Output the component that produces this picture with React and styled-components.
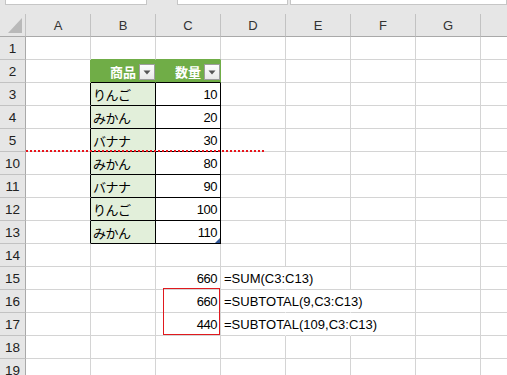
import React from 'react';
import styled, { createGlobalStyle } from 'styled-components';

const GRID = '#d4d4d4';
const HEAD_BG = '#e6e6e6';
const HEAD_LINE = '#c2c2c2';
const HEAD_EDGE = '#a9a9a9';
const GREEN = '#70ad47';
const LIGHT_GREEN = '#e2efda';
const INK = '#000';

const GlobalStyle = createGlobalStyle`
    html, body {
        margin: 0;
        padding: 0;
        background: #fff;
        overflow: hidden;
    }
    body {
        font-family: "Liberation Sans", "Noto Sans CJK JP", sans-serif;
    }
`;

// sheet data: row label, item (B), quantity (C), formula text (D)
const rows = [
    { n: 1 },
    { n: 2, header: true },
    { n: 3, item: 'りんご', qty: 10 },
    { n: 4, item: 'みかん', qty: 20 },
    { n: 5, item: 'バナナ', qty: 30 },
    { n: 10, item: 'みかん', qty: 80 },
    { n: 11, item: 'バナナ', qty: 90 },
    { n: 12, item: 'りんご', qty: 100 },
    { n: 13, item: 'みかん', qty: 110, last: true },
    { n: 14 },
    { n: 15, qty: 660, formula: '=SUM(C3:C13)' },
    { n: 16, qty: 660, formula: '=SUBTOTAL(9,C3:C13)', wide: true },
    { n: 17, qty: 440, formula: '=SUBTOTAL(109,C3:C13)', wide: true },
    { n: 18 },
    { n: 19 },
];

const columns = ['A', 'B', 'C', 'D', 'E', 'F', 'G', ''];

const FilterButton = () => (
    <DropButton>
        <svg width="8" height="5" viewBox="0 0 8 5">
            <path d="M0.5 0.5 H7.5 L4 4.5 Z" fill="#555" />
        </svg>
    </DropButton>
);

const App = () => {
    return (
        <Window>
            <GlobalStyle />
            <Toolbar>
                <InputBox $width={142} />
                <InputBox $width={111} $gap={30} />
                <InputBox $gap={2} $grow />
            </Toolbar>
            <Sheet>
                <Corner><CornerMark /></Corner>
                { columns.map((c, i) => <ColHeader key={i}>{c}</ColHeader>) }

                { rows.map(row => {
                    const inTable = row.n >= 3 && row.n <= 13;
                    const aRight = row.header ? GREEN : inTable ? INK : GRID;
                    const topOfTable = row.n === 1 ? GREEN : GRID;

                    return (
                        <React.Fragment key={row.n}>
                            <RowHeader>{row.n}</RowHeader>
                            <Cell $r={aRight} />
                            { row.header ? (
                                <>
                                    <Cell $bg={GREEN} $r={GREEN} $b={INK} $end $tight>
                                        <HeadText>商品</HeadText><FilterButton />
                                    </Cell>
                                    <Cell $bg={GREEN} $r={GREEN} $b={INK} $end $tight>
                                        <HeadText>数量</HeadText><FilterButton />
                                    </Cell>
                                </>
                            ) : (
                                <>
                                    <Cell $bg={inTable ? LIGHT_GREEN : undefined} $r={inTable ? INK : GRID} $b={inTable ? INK : topOfTable}>
                                        { row.item && <Kana>{row.item}</Kana> }
                                    </Cell>
                                    <Cell $r={inTable ? INK : GRID} $b={inTable ? INK : topOfTable} $end>
                                        { row.qty !== undefined && <Num>{row.qty}</Num> }
                                        { row.last && <ResizeHandle /> }
                                    </Cell>
                                </>
                            )}
                            <Cell $r={row.formula ? '#fff' : GRID}>
                                { row.formula && <Formula>{row.formula}</Formula> }
                            </Cell>
                            <Cell $r={row.wide ? '#fff' : GRID} />
                            <Cell />
                            <Cell />
                            <Cell />
                        </React.Fragment>
                    );
                })}

                <PageBreak />
                <Highlight />
            </Sheet>
        </Window>
    );
};

const Window = styled.div`
    width: 507px;
    height: 375px;
    overflow: hidden;
    background: ${HEAD_BG};
`;

const Toolbar = styled.div`
    display: flex;
    align-items: flex-start;
    height: 14px;
    padding-left: 5px;
    box-sizing: border-box;
`;

const InputBox = styled.div`
    box-sizing: border-box;
    height: 5px;
    width: ${p => p.$width ? `${p.$width}px` : 'auto'};
    flex: ${p => p.$grow ? '1' : 'none'};
    margin-left: ${p => p.$gap || 0}px;
    background: #fff;
    border: 1px solid #c6c6c6;
    border-top: none;
`;

const Sheet = styled.div`
    position: relative;
    display: grid;
    grid-template-columns: 26px repeat(8, 65px);
    grid-auto-rows: 23px;
    width: 507px;
    overflow: hidden;
    background: #fff;
`;

const HeaderBase = styled.div`
    box-sizing: border-box;
    background: ${HEAD_BG};
    color: #333;
    font-family: "Liberation Sans", Arial, sans-serif;
    font-size: 13px;
    display: flex;
    align-items: center;
    justify-content: center;
`;

const Corner = styled(HeaderBase)`
    justify-content: flex-end;
    align-items: flex-end;
    padding: 0 3px 3px 0;
    border-right: 1px solid ${HEAD_LINE};
    border-bottom: 1px solid ${HEAD_EDGE};
`;

const CornerMark = styled.div`
    width: 14px;
    height: 15px;
    background: #b9b9b9;
    clip-path: polygon(100% 0, 100% 100%, 0 100%);
`;

const ColHeader = styled(HeaderBase)`
    border-right: 1px solid ${HEAD_LINE};
    border-bottom: 1px solid ${HEAD_EDGE};
    padding-top: 1px;
`;

const RowHeader = styled(HeaderBase)`
    border-right: 1px solid ${HEAD_EDGE};
    border-bottom: 1px solid ${HEAD_LINE};
    color: #222;
    font-size: 13.5px;
`;

const Cell = styled.div`
    position: relative;
    box-sizing: border-box;
    display: flex;
    align-items: center;
    justify-content: ${p => p.$end ? 'flex-end' : 'flex-start'};
    gap: 3px;
    padding: ${p => p.$tight ? '0 0 0 3px' : '1px 3px 0 3px'};
    white-space: nowrap;
    background: ${p => p.$bg || 'transparent'};
    border-right: 1px solid ${p => p.$r || GRID};
    border-bottom: 1px solid ${p => p.$b || GRID};
    font-size: 13px;
    color: #000;
`;

const HeadText = styled.span`
    color: #fff;
    font-family: "Noto Sans CJK JP", sans-serif;
    font-weight: 700;
    font-size: 13px;
`;

const DropButton = styled.div`
    box-sizing: border-box;
    width: 16px;
    height: 16px;
    margin-top: 1px;
    display: flex;
    align-items: center;
    justify-content: center;
    padding-top: 1px;
    background: linear-gradient(#fdfdfd, #e9e9e9);
    border: 1px solid #9d9d9d;
`;

const Kana = styled.span`
    font-family: "Noto Sans CJK JP", sans-serif;
    font-size: 13px;
    letter-spacing: -0.5px;
    margin-left: -1px;
`;

const Num = styled.span`
    font-family: "Liberation Sans", Arial, sans-serif;
    letter-spacing: -0.5px;
`;

const Formula = styled.span`
    position: relative;
    z-index: 1;
    font-family: "Liberation Sans", Arial, sans-serif;
    letter-spacing: 0;
`;

const ResizeHandle = styled.div`
    position: absolute;
    right: 0;
    bottom: 0;
    width: 5px;
    height: 5px;
    background: #2f5597;
    clip-path: polygon(100% 0, 100% 100%, 0 100%);
`;

const PageBreak = styled.div`
    position: absolute;
    left: 26px;
    top: 136px;
    width: 238px;
    height: 2px;
    background: repeating-linear-gradient(90deg, #e8141b 0 2px, transparent 2px 4px);
`;

const Highlight = styled.div`
    position: absolute;
    left: 163px;
    top: 274px;
    width: 57px;
    height: 47px;
    box-sizing: border-box;
    border: 1px solid #e0191e;
`;

export default App;
